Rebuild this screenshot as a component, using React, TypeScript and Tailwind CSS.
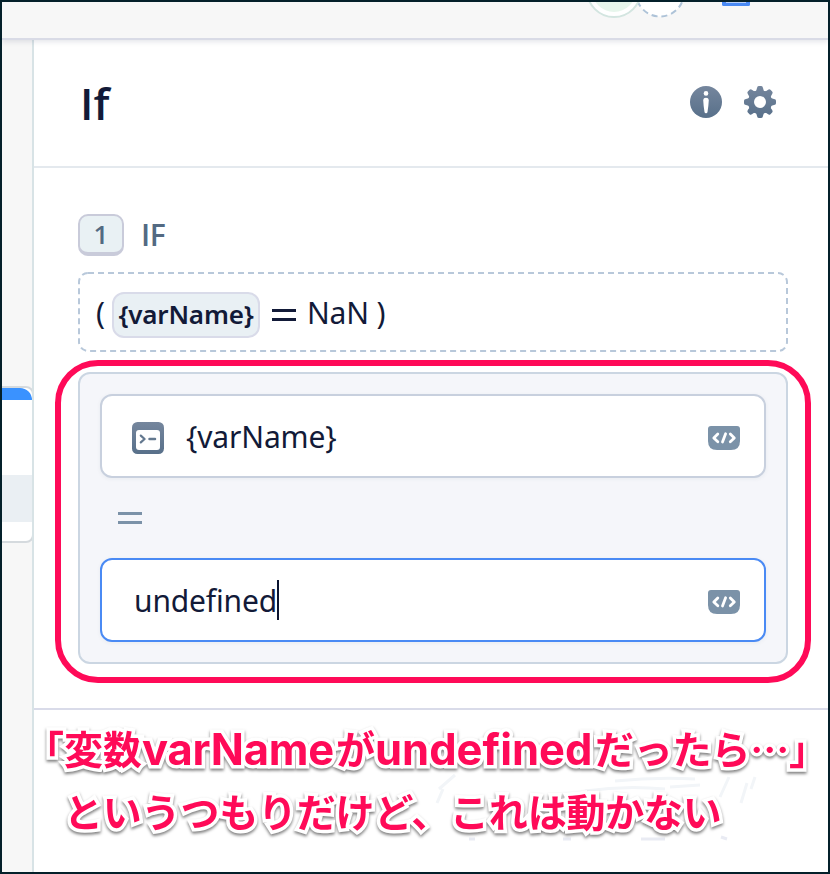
import type { ReactNode } from "react";

const noto = "font-['Noto_Sans',sans-serif]";

function CodeBadge() {
  return (
    <svg width="32" height="24" viewBox="0 0 32 24" className="block shrink-0">
      <path d="M3 0H29Q32 0 32 3V15Q32 24 23 24H9Q0 24 0 15V3Q0 0 3 0Z" fill="#7b92a8" />
      <g fill="none" stroke="#fff" strokeWidth="2.8" strokeLinecap="round" strokeLinejoin="round">
        <path d="M9.8 8L5.8 12L9.8 15.8" />
        <path d="M22.3 8L26.3 12L22.3 15.8" />
        <path d="M17.6 7.8L14.5 16" />
      </g>
    </svg>
  );
}

function InfoIcon() {
  return (
    <svg width="32" height="32" viewBox="0 0 32 32">
      <defs>
        <linearGradient id="slate" x1="0" y1="0" x2="0" y2="1">
          <stop offset="0" stopColor="#75869d" />
          <stop offset="1" stopColor="#58708a" />
        </linearGradient>
      </defs>
      <circle cx="16" cy="16" r="16" fill="url(#slate)" />
      <circle cx="16" cy="7.4" r="2.3" fill="#fff" />
      <path d="M13.2 14Q13.4 11.8 16 11.8Q18.6 11.8 18.8 14Q18.5 20 17.5 26Q17.3 27.2 16 27.2Q14.7 27.2 14.5 26Q13.5 20 13.2 14Z" fill="#fff" />
    </svg>
  );
}

const teeth = [0, 45, 90, 135, 180, 225, 270, 315];

function GearIcon() {
  return (
    <svg width="32" height="32" viewBox="0 0 32 32">
      <defs>
        <linearGradient id="gear" gradientUnits="userSpaceOnUse" x1="0" y1="0" x2="0" y2="32">
          <stop offset="0" stopColor="#75869d" />
          <stop offset="1" stopColor="#58708a" />
        </linearGradient>
        <mask id="gearMask">
          <g fill="#fff">
            <circle cx="16" cy="16" r="12" />
            {teeth.map((a) => (
              <path key={a} transform={`rotate(${a} 16 16)`} d="M10.5 6Q12.8 5 13 2Q13.2 0 14.8 0H17.2Q18.8 0 19 2Q19.2 5 21.5 6Z" />
            ))}
          </g>
          <circle cx="16" cy="16" r="6" fill="#000" />
        </mask>
      </defs>
      <rect width="32" height="32" fill="url(#gear)" mask="url(#gearMask)" />
    </svg>
  );
}

function TerminalIcon() {
  return (
    <svg width="32" height="32" viewBox="0 0 32 32" className="mt-[3px] shrink-0">
      <rect width="32" height="32" rx="5.5" fill="url(#slate)" />
      <rect x="4" y="8" width="24" height="20" rx="3" fill="#fff" />
      <path d="M8.8 13.6L12.6 17L8.8 20.4" fill="none" stroke="#63788f" strokeWidth="2.2" strokeLinejoin="round" strokeLinecap="round" />
      <path d="M17.5 17H23" stroke="#63788f" strokeWidth="2.5" strokeLinecap="round" />
    </svg>
  );
}

function TopBar() {
  return (
    <header className="relative z-10 h-[38px] shrink-0 border-b-2 border-[#d9dbe6] bg-[#f7f7f7] shadow-[0_2px_5px_rgba(40,50,90,0.12)]">
      <svg width="826" height="36" viewBox="2 2 826 36" className="block">
        <circle cx="660" cy="-7.5" r="24" fill="#fff" stroke="#aec3d8" strokeWidth="2" strokeDasharray="6 4" />
        <circle cx="614" cy="-10" r="27" fill="#fff" stroke="#d3e5e0" strokeWidth="2" />
        <circle cx="614" cy="-10" r="22" fill="#e7f6ec" />
        <rect x="722" y="-10" width="28" height="16" rx="1.5" fill="#4a8af4" />
        <path d="M726 2.5H746" stroke="#b9d2fb" strokeWidth="1" />
      </svg>
    </header>
  );
}

function CanvasStrip() {
  return (
    <aside className="flex w-8 shrink-0 flex-col overflow-hidden border-r-2 border-[#d8e3e6] bg-[#f7f7f7] pt-[346px]">
      <div className="-ml-3 flex h-[157px] w-[44px] shrink-0 flex-col overflow-hidden rounded-r-lg border-2 border-[#d5dade] bg-white">
        <div className="h-3 shrink-0 rounded-tr-[14px] bg-[#3a92ff]" />
        <div className="mt-[75px] h-[47px] shrink-0 bg-[#eaeff3]" />
      </div>
    </aside>
  );
}

function Field({ focused, children }: { focused?: boolean; children: ReactNode }) {
  return (
    <div
      className={
        (focused ? "border-[#4a8af4] " : "border-[#c8d0de] ") +
        "flex h-[84px] items-center rounded-xl border-2 bg-white pr-6 shadow-[0_1px_4px_rgba(40,60,90,0.06)]"
      }
    >
      {children}
      <span className="mt-1 ml-auto">
        <CodeBadge />
      </span>
    </div>
  );
}

function Summary() {
  return (
    <div className="relative mt-4 flex h-20 items-center pt-[5px] pl-[18px] text-[30px] leading-10 text-[#121a38]">
      <svg width="710" height="80" className="absolute inset-0">
        <rect x="1" y="1" width="708" height="78" rx="9" fill="none" stroke="#b8c8da" strokeWidth="2" strokeDasharray="6 4" />
      </svg>
      <span className="-mt-[4px] w-[16px]">(</span>
      <span className="flex h-[46px] w-[148px] items-center justify-center rounded-xl border-2 border-[#d9dbe9] bg-[#e9f0f4] pb-[2px] text-[26px] font-semibold tracking-[-0.2px]">
        {"{varName}"}
      </span>
      <span className="mx-3 flex h-3 w-6 flex-col justify-between">
        <i className="h-[3px] bg-[#121a38]" />
        <i className="h-[3px] bg-[#121a38]" />
      </span>
      <span className="-mt-[4px] -ml-px tracking-[-0.2px]">NaN )</span>
    </div>
  );
}

function Condition() {
  return (
    <div className="relative mt-5 h-[292px] rounded-xl border-2 border-[#cbd6e2] bg-[#f5f6fa] p-5 text-[30px] text-[#121a38]">
      <Field>
        <span className="ml-[30px] flex items-center gap-[22px]">
          <TerminalIcon />
          <span className="mt-px tracking-[-0.15px]">{"{varName}"}</span>
        </span>
      </Field>
      <div className="flex h-20 flex-col justify-center gap-[6px] pl-[18px]">
        <i className="h-[3px] w-6 bg-[#7b92a8]" />
        <i className="h-[3px] w-6 bg-[#7b92a8]" />
      </div>
      <Field focused>
        <span className="mt-px ml-8 tracking-[-0.15px]">undefined</span>
        <span className="h-10 w-[2px] bg-[#0c1430]" />
      </Field>
      <div className="absolute -top-[14px] -left-[25px] h-[323px] w-[756px] rounded-[43px] border-[6px] border-[#ff0a58]" />
    </div>
  );
}

function Smudges() {
  return (
    <svg width="350" height="84" className="absolute top-[765px] left-[425px]" fill="none" stroke="#f2f5f8" strokeWidth="3">
      <path d="M14 24L30 10M12 38L18 24M190 16Q230 12 270 14M245 22L275 20M295 32L304 12M316 38L322 18M330 12L326 24M160 26Q200 20 240 24" />
      <path d="M44 74H50M138 74H146M216 74H240M296 72L302 74" stroke="#e9ebf3" />
    </svg>
  );
}

function Caption() {
  return (
    <div className="absolute inset-0 font-['Noto_Sans_CJK_JP',sans-serif] text-[39px] font-bold text-[#ff0a58] [-webkit-text-stroke:7px_white] [filter:drop-shadow(0_2px_1.5px_rgba(0,0,0,0.5))] [paint-order:stroke_fill]">
      <p className="absolute top-[718px] left-[25px] flex h-[58px] items-center whitespace-nowrap">
        <span className="w-[117px]">「変数</span>
        <span className="mt-[5px] w-[194px] font-['Inter',sans-serif] text-[43.5px] tracking-[-0.2px]">varName</span>
        <span className="w-[39px]">が</span>
        <span className="mt-[5px] w-[220px] font-['Inter',sans-serif] text-[43.5px]">undefined</span>
        <span className="tracking-[-0.2px]">だったら…」</span>
      </p>
      <p className="absolute top-[781px] left-[64px] flex h-[58px] items-center tracking-[-0.2px] whitespace-nowrap">
        というつもりだけど、これは動かない
      </p>
    </div>
  );
}

export default function App() {
  return (
    <div className={`${noto} relative flex h-[874px] w-[830px] flex-col overflow-hidden border-2 border-[#04202a] bg-white`}>
      <TopBar />
      <div className="flex min-h-0 flex-1">
        <CanvasStrip />
        <main className="min-w-0 flex-1">
          <div className="flex h-32 items-center border-b-2 border-[#e4e9ee] pr-[52px] pl-[46px]">
            <h1 className="font-['Open_Sans',sans-serif] text-[44px] font-semibold text-[#121a38]">If</h1>
            <div className="-mt-[2px] ml-auto flex gap-[22px]">
              <InfoIcon />
              <GearIcon />
            </div>
          </div>
          <section className="h-[542px] border-b-2 border-[#d9dbe9] pt-[46px] pr-10 pl-11">
            <div className="flex h-[42px] items-center gap-[17px] font-['Open_Sans',sans-serif] font-semibold text-[#536a82]">
              <span className="flex h-[42px] w-[46px] items-center justify-center rounded-[10px] border-2 border-b-4 border-[#c9cbda] bg-[#e9f1f4] text-[26px]">
                1
              </span>
              <span className="-mt-px text-[30px] tracking-[-0.3px]">IF</span>
            </div>
            <Summary />
            <Condition />
          </section>
        </main>
      </div>
      <div className="absolute -top-[2px] -left-[2px] h-[874px] w-[830px]">
        <Smudges />
        <Caption />
      </div>
    </div>
  );
}
